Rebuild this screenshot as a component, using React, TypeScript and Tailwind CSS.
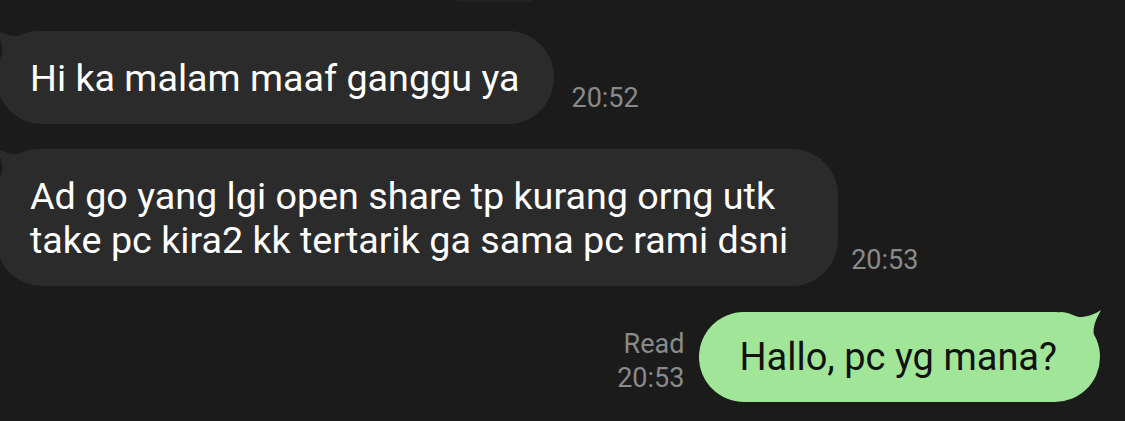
const font = { fontFamily: 'Roboto, "Noto Sans", sans-serif' };

const LeftTail = () => (
  <svg
    className="absolute -left-[5px] -top-[4px]"
    width="50"
    height="40"
    viewBox="0 0 50 40"
  >
    <path
      d="M45 4 C35 4 29 10 23 9 C15 8 8 5 4 2 C8 10 13 18 11 28 L45 32 Z"
      fill="#2b2b2b"
    />
  </svg>
);

const RightTail = () => (
  <svg
    className="absolute -right-[5px] -top-[4px]"
    width="50"
    height="40"
    viewBox="0 0 50 40"
  >
    <path
      d="M5 4 C15 4 21 10 27 9 C35 8 42 5 46 2 C42 10 37 18 39 28 L5 32 Z"
      fill="#a0e598"
    />
  </svg>
);

const Time = ({ children }: { children: React.ReactNode }) => (
  <span className="text-[27px] leading-[30px] text-[#8a8a8a]">{children}</span>
);

export default function App() {
  return (
    <div
      className="relative flex h-[421px] w-[1125px] flex-col overflow-hidden bg-[#1b1b1b]"
      style={font}
    >
      <div className="ml-[457px] h-[2px] w-[76px] rounded-b bg-[#222222]" />

      <div className="mt-[29px] flex items-end">
        <div className="relative -ml-[4px] rounded-[46px] bg-[#2b2b2b] pb-[24px] pl-[34px] pr-[35px] pt-[25px] text-[37.7px] leading-[44px] text-white">
          <LeftTail />
          <span className="relative">Hi ka malam maaf ganggu ya</span>
        </div>
        <div className="mb-[10px] ml-[17px]">
          <Time>20:52</Time>
        </div>
      </div>

      <div className="mt-[25px] flex items-end">
        <div className="relative -ml-[4px] rounded-[46px] bg-[#2b2b2b] pb-[24px] pl-[34px] pr-[50px] pt-[25px] text-[37.7px] leading-[44px] text-white">
          <LeftTail />
          <span className="relative">
            Ad go yang lgi open share tp kurang orng utk
            <br />
            take pc kira2 kk tertarik ga sama pc rami dsni
          </span>
        </div>
        <div className="mb-[10px] ml-[13px]">
          <Time>20:53</Time>
        </div>
      </div>

      <div className="mt-[26px] flex items-end justify-end pr-[25px]">
        <div className="mb-[7px] mr-[15px] flex flex-col items-end text-[27px] leading-[34px] text-[#8a8a8a]">
          <span>Read</span>
          <span>20:53</span>
        </div>
        <div className="relative rounded-[46px] bg-[#a0e598] pb-[23px] pl-[40px] pr-[43px] pt-[23px] text-[38px] leading-[44px] text-[#111111]">
          <RightTail />
          <span className="relative">Hallo, pc yg mana?</span>
        </div>
      </div>
    </div>
  );
}
